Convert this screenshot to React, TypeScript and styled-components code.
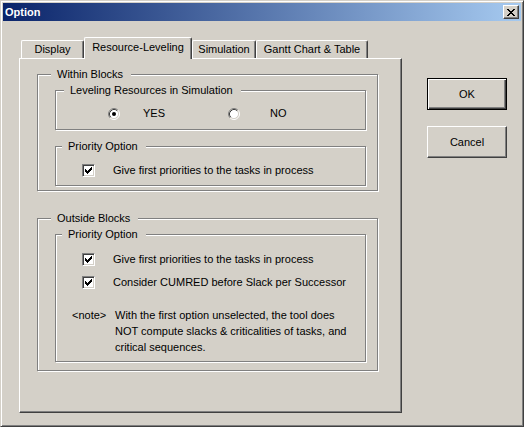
import React from "react";
import styled, { createGlobalStyle } from "styled-components";

const GlobalStyle = createGlobalStyle`
  html, body {
    margin: 0;
    padding: 0;
    background: #d4d0c8;
  }
  body {
    font-family: "Liberation Sans", Arial, sans-serif;
    font-size: 11px;
    color: #000;
  }
  * {
    box-sizing: border-box;
  }
`;

const Window = styled.div`
  width: 524px;
  height: 427px;
  background: #d4d0c8;
  border: 1px solid;
  border-color: #d4d0c8 #404040 #404040 #d4d0c8;
  box-shadow: inset 1px 1px 0 #fff, inset -1px -1px 0 #808080;
  padding: 2px;
  display: flex;
  flex-direction: column;
`;

const TitleBar = styled.div`
  height: 18px;
  flex: none;
  display: flex;
  align-items: center;
  justify-content: space-between;
  padding: 0 2px;
  background: linear-gradient(to right, #0a246a, #a6caf0);
  color: #fff;
  font-weight: bold;
  line-height: 13px;
`;

const CloseButton = styled.div`
  width: 16px;
  height: 14px;
  display: flex;
  align-items: center;
  justify-content: center;
  background: #d4d0c8;
  border: 1px solid;
  border-color: #fff #404040 #404040 #fff;
  box-shadow: inset -1px -1px 0 #808080;
`;

const Body = styled.div`
  display: flex;
  padding: 16px 0 0 16px;
`;

const TabControl = styled.div`
  width: 383px;
  display: flex;
  flex-direction: column;
`;

const TabRow = styled.div`
  height: 21px;
  display: flex;
  align-items: flex-end;
  padding-left: 2px;
`;

const Tab = styled.div<{ $active?: boolean; $w: number }>`
  width: ${(p) => p.$w}px;
  height: ${(p) => (p.$active ? 22 : 18)}px;
  margin-bottom: ${(p) => (p.$active ? -1 : 0)}px;
  position: relative;
  z-index: ${(p) => (p.$active ? 2 : 1)};
  display: flex;
  justify-content: center;
  padding-top: ${(p) => (p.$active ? 3 : 2)}px;
  line-height: 13px;
  background: #d4d0c8;
  border-top: 1px solid #fff;
  border-left: 1px solid #fff;
  border-right: 1px solid #404040;
  border-radius: 2px 2px 0 0;
  box-shadow: inset -1px 0 0 #808080;
  white-space: nowrap;
`;

const Panel = styled.div`
  width: 383px;
  height: 355px;
  border: 1px solid;
  border-color: #fff #404040 #404040 #fff;
  box-shadow: inset -1px -1px 0 #808080;
  padding: 9px 0 0 17px;
`;

const Group = styled.fieldset<{ $w: number; $mt?: number }>`
  width: ${(p) => p.$w}px;
  margin: ${(p) => p.$mt ?? 0}px 0 0 0;
  padding: 0;
  min-width: 0;
  border: 1px solid #808080;
  box-shadow: inset 1px 1px 0 #fff, 1px 1px 0 #fff;
`;

const Legend = styled.legend<{ $indent: number }>`
  margin-left: ${(p) => p.$indent}px;
  padding: 0 8px 0 6px;
  line-height: 13px;
  background: #d4d0c8;
  white-space: nowrap;
`;

const GroupBody = styled.div<{ $pad: string }>`
  padding: ${(p) => p.$pad};
  display: flex;
  flex-direction: column;
`;

const RadioRow = styled.div`
  display: flex;
  align-items: center;
  height: 13px;
`;

const RadioItem = styled.div<{ $w: number; $gap: number }>`
  width: ${(p) => p.$w}px;
  display: flex;
  align-items: center;
  gap: ${(p) => p.$gap}px;
  line-height: 13px;
`;

const CheckRow = styled.div<{ $mt?: number }>`
  display: flex;
  align-items: center;
  height: 13px;
  margin-top: ${(p) => p.$mt ?? 0}px;
  padding-left: 26px;
  gap: 18px;
  line-height: 13px;
  white-space: nowrap;
`;

const CheckBox = styled.div`
  width: 13px;
  height: 13px;
  flex: none;
  display: flex;
  align-items: center;
  justify-content: center;
  background: #fff;
  border: 1px solid;
  border-color: #808080 #fff #fff #808080;
  box-shadow: inset 1px 1px 0 #404040, inset -1px -1px 0 #d4d0c8;
`;

const NoteRow = styled.div`
  display: grid;
  grid-template-columns: 43px auto;
  margin-top: 18px;
  padding-left: 16px;
  line-height: 16px;
  white-space: nowrap;
`;

const ButtonColumn = styled.div`
  display: flex;
  flex-direction: column;
  gap: 16px;
  margin-left: 25px;
  padding-top: 41px;
`;

const Button = styled.button<{ $default?: boolean }>`
  width: 80px;
  height: 32px;
  padding: 0;
  font: inherit;
  color: #000;
  background: #d4d0c8;
  border: 1px solid;
  border-color: ${(p) =>
    p.$default ? "#000" : "#fff #404040 #404040 #fff"};
  box-shadow: ${(p) =>
    p.$default
      ? "inset 1px 1px 0 #fff, inset -1px -1px 0 #404040, inset -2px -2px 0 #808080"
      : "inset -1px -1px 0 #808080"};
`;

const xPixels = [
  "XX....XX",
  ".XX..XX.",
  "..XXXX..",
  "...XX...",
  "..XXXX..",
  ".XX..XX.",
  "XX....XX",
];

const checkPixels = [
  "......X",
  ".....XX",
  "X...XXX",
  "XX.XXX.",
  "XXXXX..",
  ".XXX...",
  "..X....",
];

function PixelGlyph({ rows }: { rows: string[] }) {
  const w = rows[0].length;
  const h = rows.length;
  return (
    <svg width={w} height={h} viewBox={`0 0 ${w} ${h}`} shapeRendering="crispEdges">
      {rows.flatMap((row, y) =>
        row.split("").map((c, x) =>
          c === "X" ? <rect key={`${x}-${y}`} x={x} y={y} width={1} height={1} fill="#000" /> : null
        )
      )}
    </svg>
  );
}

function Radio({ checked }: { checked?: boolean }) {
  return (
    <svg width={12} height={12} viewBox="0 0 12 12" style={{ flex: "none" }}>
      <circle cx={6} cy={6} r={4.5} fill="#fff" />
      <path d="M2.11 9.89 A5.5 5.5 0 0 1 9.89 2.11" fill="none" stroke="#808080" />
      <path d="M9.89 2.11 A5.5 5.5 0 0 1 2.11 9.89" fill="none" stroke="#fff" />
      <path d="M2.82 9.18 A4.5 4.5 0 0 1 9.18 2.82" fill="none" stroke="#404040" />
      <path d="M9.18 2.82 A4.5 4.5 0 0 1 2.82 9.18" fill="none" stroke="#d4d0c8" />
      {checked && <circle cx={6} cy={6} r={2} fill="#000" />}
    </svg>
  );
}

function Check({ label, mt }: { label: string; mt?: number }) {
  return (
    <CheckRow $mt={mt}>
      <CheckBox>
        <PixelGlyph rows={checkPixels} />
      </CheckBox>
      <span>{label}</span>
    </CheckRow>
  );
}

export default function App() {
  return (
    <>
      <GlobalStyle />
      <Window>
        <TitleBar>
          <span>Option</span>
          <CloseButton>
            <PixelGlyph rows={xPixels} />
          </CloseButton>
        </TitleBar>
        <Body>
          <TabControl>
            <TabRow>
              <Tab $w={63}>Display</Tab>
              <Tab $w={108} $active>
                Resource-Leveling
              </Tab>
              <Tab $w={64}>Simulation</Tab>
              <Tab $w={112}>Gantt Chart &amp; Table</Tab>
            </TabRow>
            <Panel>
              <Group $w={341}>
                <Legend $indent={13}>Within Blocks</Legend>
                <GroupBody $pad="3px 0 4px 17px">
                  <Group $w={311}>
                    <Legend $indent={8}>Leveling Resources in Simulation</Legend>
                    <GroupBody $pad="10px 0 9px 52px">
                      <RadioRow>
                        <RadioItem $w={120} $gap={23}>
                          <Radio checked />
                          <span>YES</span>
                        </RadioItem>
                        <RadioItem $w={60} $gap={30}>
                          <Radio />
                          <span>NO</span>
                        </RadioItem>
                      </RadioRow>
                    </GroupBody>
                  </Group>
                  <Group $w={311} $mt={10}>
                    <Legend $indent={6}>Priority Option</Legend>
                    <GroupBody $pad="11px 0 8px 0">
                      <Check label="Give first priorities to the tasks in process" />
                    </GroupBody>
                  </Group>
                </GroupBody>
              </Group>

              <Group $w={341} $mt={21}>
                <Legend $indent={13}>Outside Blocks</Legend>
                <GroupBody $pad="3px 0 8px 17px">
                  <Group $w={311}>
                    <Legend $indent={6}>Priority Option</Legend>
                    <GroupBody $pad="12px 0 6px 0">
                      <Check label="Give first priorities to the tasks in process" />
                      <Check label="Consider CUMRED before Slack per Successor" mt={10} />
                      <NoteRow>
                        <span>{"<note>"}</span>
                        <span>
                          With the first option unselected, the tool does
                          <br />
                          NOT compute slacks &amp; criticalities of tasks, and
                          <br />
                          critical sequences.
                        </span>
                      </NoteRow>
                    </GroupBody>
                  </Group>
                </GroupBody>
              </Group>
            </Panel>
          </TabControl>
          <ButtonColumn>
            <Button $default>OK</Button>
            <Button>Cancel</Button>
          </ButtonColumn>
        </Body>
      </Window>
    </>
  );
}
